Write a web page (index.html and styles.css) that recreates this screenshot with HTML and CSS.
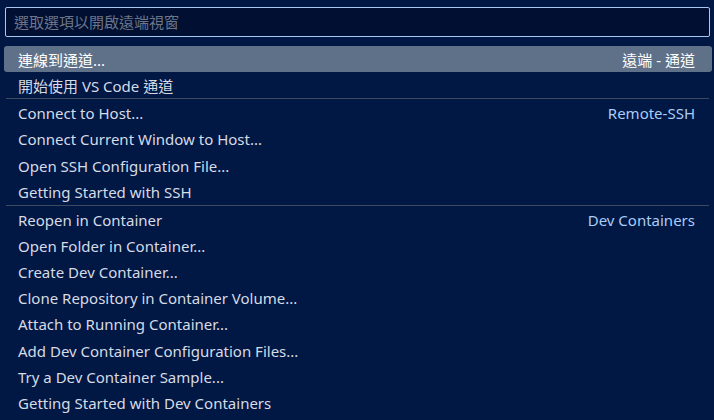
FILE: index.html
```html
<!DOCTYPE html>
<html lang="zh-Hant">
<head>
<meta charset="utf-8">
<link rel="stylesheet" href="styles.css">
</head>
<body>
<div class="picker">
  <div class="input-wrap">
    <input class="input" type="text" placeholder="選取選項以開啟遠端視窗">
  </div>
  <div class="list">
    <div class="row selected"><span class="label">連線到通道...</span><span class="desc">遠端 - 通道</span></div>
    <div class="row"><span class="label">開始使用 VS Code 通道</span></div>
    <div class="sep"></div>
    <div class="row"><span class="label">Connect to Host...</span><span class="desc">Remote-SSH</span></div>
    <div class="row"><span class="label">Connect Current Window to Host...</span></div>
    <div class="row"><span class="label">Open SSH Configuration File...</span></div>
    <div class="row"><span class="label">Getting Started with SSH</span></div>
    <div class="sep"></div>
    <div class="row"><span class="label">Reopen in Container</span><span class="desc">Dev Containers</span></div>
    <div class="row"><span class="label">Open Folder in Container...</span></div>
    <div class="row"><span class="label">Create Dev Container...</span></div>
    <div class="row"><span class="label">Clone Repository in Container Volume...</span></div>
    <div class="row"><span class="label">Attach to Running Container...</span></div>
    <div class="row"><span class="label">Add Dev Container Configuration Files...</span></div>
    <div class="row"><span class="label">Try a Dev Container Sample...</span></div>
    <div class="row"><span class="label">Getting Started with Dev Containers</span></div>
  </div>
</div>
</body>
</html>
```
FILE: styles.css
```css
html, body {
  margin: 0;
  padding: 0;
  background: #011744;
  width: 714px;
  height: 420px;
  overflow: hidden;
}
.picker {
  font-family: "Noto Sans", "Noto Sans CJK TC", sans-serif;
  font-size: 15px;
  color: #d6dbe4;
  padding: 7px 4px 0 5px;
}
.input {
  box-sizing: border-box;
  width: 705px;
  height: 30px;
  background: #000f32;
  border: 1px solid #a8c8f0;
  border-radius: 2px;
  padding: 0 8px;
  font-family: "Noto Sans", "Noto Sans CJK TC", sans-serif;
  font-size: 15px;
  color: #d6dbe4;
  outline: none;
}
.input::placeholder {
  color: #6d7588;
}
.list {
  margin-top: 9px;
  margin-left: -1px;
  width: 708px;
}
.row {
  display: flex;
  justify-content: space-between;
  align-items: center;
  height: 26.15px;
  padding: 0 17px 0 14px;
  white-space: nowrap;
}
.row.selected {
  background: #5f7189;
  border-radius: 3px;
  color: #ffffff;
}
.desc {
  color: #a9cdf6;
}
.row.selected .desc {
  color: #ffffff;
}
.sep {
  height: 1px;
  background: #3e4a62;
  margin: 0 3px 1px 2px;
}
```
